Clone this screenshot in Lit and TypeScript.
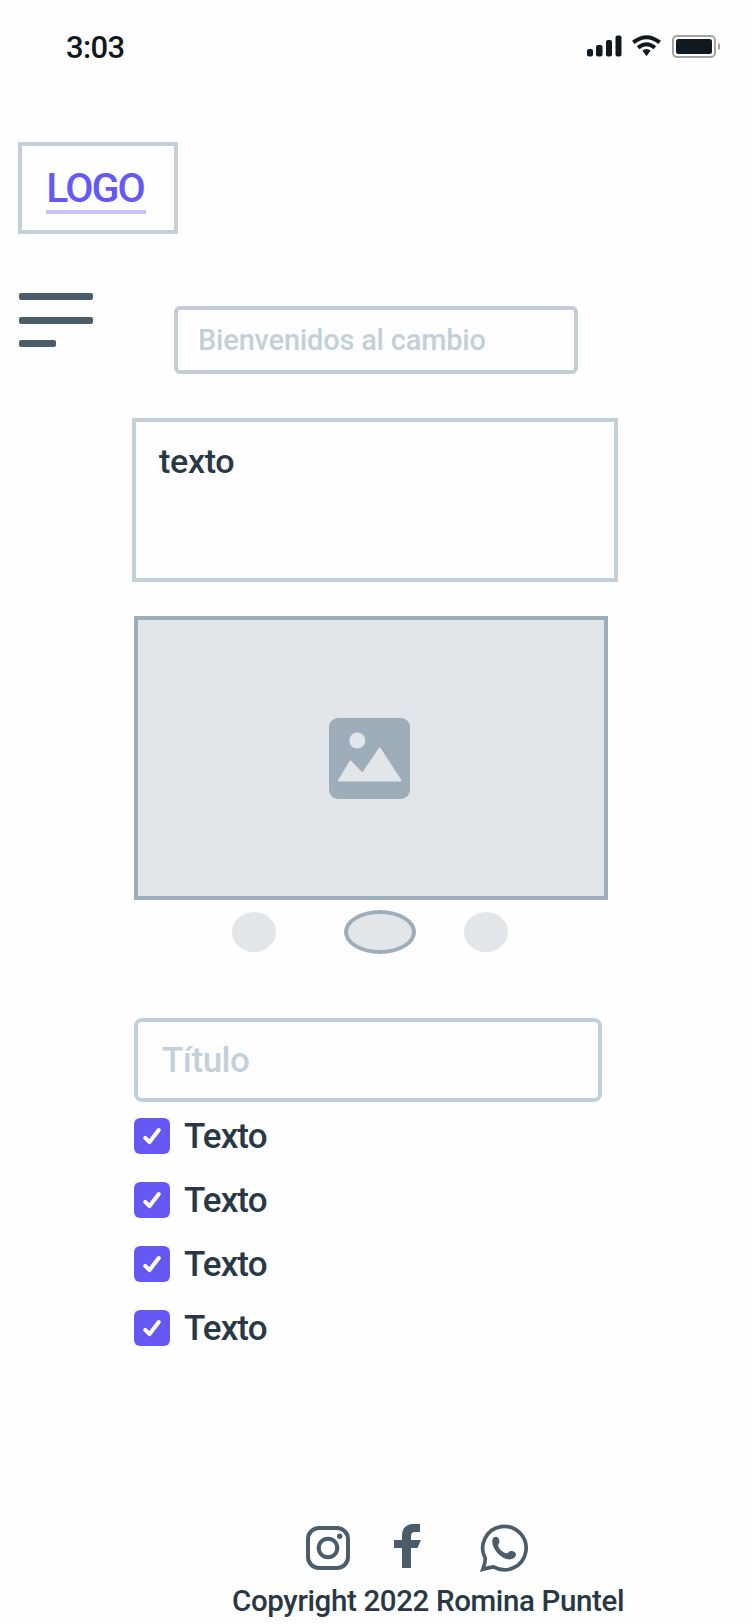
import { LitElement, html, css, svg } from "lit";
import { customElement } from "lit/decorators.js";

@customElement("status-bar")
class StatusBar extends LitElement {
  static styles = css`
    :host { display: flex; justify-content: space-between; align-items: flex-start; height: 142px; padding: 30px 32px 0 66px; box-sizing: border-box; color: #101820; }
    .time { font-size: 31px; line-height: 36px; font-weight: 500; letter-spacing: -0.6px; }
    .signals { display: block; width: 136px; height: 26px; margin-top: 4px; }
  `;
  render() {
    return html`
      <span class="time">3:03</span>
      <svg class="signals" viewBox="0 0 136 26">
        <g fill="#101820">
          <rect x="3" y="15" width="6" height="7.5" rx="2" />
          <rect x="12" y="11" width="6.5" height="11.5" rx="2" />
          <rect x="22" y="6" width="6" height="16.5" rx="2" />
          <rect x="31.5" y="1.5" width="6" height="21" rx="2" />
          <path d="M58.4 16.6q4.1-3.2 8.2 0l-4.1 5.600z" />
          <rect x="92" y="5" width="36" height="15" rx="2.5" />
        </g>
        <g fill="none" stroke="#101820" stroke-width="4">
          <path d="M49.3 8.4q13.2-10.4 26.4 0" />
          <path d="M54.1 13.8q8.4-7 16.8 0" />
        </g>
        <rect x="89" y="2" width="42" height="21" rx="4" fill="none" stroke="#a2a3a5" stroke-width="2" />
        <path d="M134 8.5v8q2.3-1.5 2.3-4t-2.300-4z" fill="#a2a3a5" />
      </svg>
    `;
  }
}

@customElement("check-item")
class CheckItem extends LitElement {
  static styles = css`
    :host { display: flex; gap: 14px; height: 36px; align-items: flex-start; }
    .box { flex: none; width: 36px; height: 36px; border-radius: 6px; background: #6558f5; }
    .label { padding-top: 1px; font-size: 35px; line-height: 36px; letter-spacing: -0.9px; }
  `;
  render() {
    return html`
      <svg class="box" viewBox="0 0 36 36">
        <path d="M11.2 19.8l4.3 4.3 9.3-12" fill="none" stroke="#fff" stroke-width="4" stroke-linecap="round" stroke-linejoin="round" />
      </svg>
      <span class="label"><slot></slot></span>
    `;
  }
}

const instagram = svg`
  <g fill="none" stroke="#4b5d6b" stroke-width="4">
    <rect x="2" y="2" width="40" height="40" rx="11" />
    <circle cx="22" cy="22" r="9.3" />
  </g>
  <circle cx="33.7" cy="10.3" r="2.7" fill="#4b5d6b" />`;

const facebook = svg`
  <path fill="#4b5d6b" d="M8 44V24H0v-8h8v-4C8 4 12 0 20 0h6v8h-5q-4 0-4 4v4h10l-3.500 8H17v20z" />`;

const whatsapp = svg`
  <path fill="none" stroke="#4b5d6b" stroke-width="3.7" d="M2.900 45.200Q5.500 38.500 5.200 34.200A21.700 21.700 0 1 1 13.600 42.900Q8 43.600 2.900 45.200z" />
  <path fill="#4b5d6b" d="M12.200 17.600C12 14.500 13.800 12.700 16 12.700c2.600 0 3.900 3.600 3.200 6.100-.3 1.100-1.300 1.600-1.100 2.700.9 3.700 4.600 7.200 8.500 7.800 1.200.1 1.600-1.300 2.900-1.900 2.600-1.100 6.500.4 6.500 3.200-.2 2.800-3 4.900-6.400 4.900C21.200 35.200 12.500 26 12.200 17.600z" />`;

@customElement("app-root")
class AppRoot extends LitElement {
  static styles = css`
    :host { display: flex; flex-direction: column; width: 752px; height: 1624px; overflow: hidden; background: #fefefe; color: #293845; font-family: Roboto, "Liberation Sans", sans-serif; font-weight: 500; box-sizing: border-box; }
    .logo { box-sizing: border-box; width: 160px; height: 92px; margin-left: 18px; padding: 19px 0 0 24px; border: 4px solid #c3d0da; }
    .link { display: block; box-sizing: border-box; width: 100px; height: 49px; border-bottom: 4px solid #c8c3fb; color: #6558f5; font-size: 41px; line-height: 47px; text-align: center; letter-spacing: -2px; text-indent: -2px; }
    .top { display: flex; align-items: flex-start; margin: 59px 0 0 19px; }
    .menu { display: flex; flex-direction: column; gap: 16.5px; width: 74px; }
    .bar { height: 7px; border-radius: 2px; background: #4b5d6b; }
    .short { width: 37px; }
    .field { box-sizing: border-box; border: 4px solid #c4ced8; color: #c3d0da; }
    .welcome { width: 404px; height: 68px; margin: 13px 0 0 81px; padding-left: 20px; border-radius: 6px; font-size: 29px; line-height: 60px; letter-spacing: -0.2px; }
    .area { box-sizing: border-box; width: 486px; height: 164px; margin: 44px 0 0 132px; padding: 19px 0 0 23px; border: 4px solid #c3d0da; font-size: 34px; line-height: 40px; letter-spacing: -0.3px; }
    .picture { box-sizing: border-box; display: flex; justify-content: center; width: 474px; height: 284px; margin: 34px 0 0 134px; padding: 98px 3px 0 0; border: 4px solid #9dadba; background: #e2e6e9; }
    .photo { width: 81px; height: 81px; }
    .dots { display: flex; align-items: center; height: 44px; margin: 10px 0 0 232px; }
    .dot { width: 44px; height: 40px; border-radius: 50%; background: #e2e6e9; }
    .current { box-sizing: border-box; width: 72px; height: 44px; margin: 0 48px 0 68px; border: 4px solid #9dadba; }
    .title { width: 468px; height: 84px; margin: 64px 0 0 134px; padding-left: 24px; border-radius: 8px; font-size: 35px; line-height: 78px; letter-spacing: -0.5px; }
    .list { display: flex; flex-direction: column; gap: 28px; margin: 16px 0 0 134px; }
    .social { display: flex; margin: 178px 0 0 306px; height: 48px; }
    .ig { width: 44px; height: 44px; margin-top: 2px; }
    .fb { width: 27px; height: 44px; margin-left: 44px; }
    .wa { width: 48px; height: 48px; margin-left: 59px; }
    .copy { margin: 13px 0 0 232px; font-size: 29.5px; line-height: 32px; letter-spacing: -0.37px; white-space: nowrap; }
  `;
  render() {
    return html`
      <status-bar></status-bar>
      <div class="logo"><a class="link">LOGO</a></div>
      <div class="top">
        <div class="menu"><div class="bar"></div><div class="bar"></div><div class="bar short"></div></div>
        <div class="field welcome">Bienvenidos al cambio</div>
      </div>
      <div class="area">texto</div>
      <div class="picture">
        <svg class="photo" viewBox="0 0 81 81">
          <rect width="81" height="81" rx="9" fill="#9dadba" />
          <circle cx="28.3" cy="22.5" r="8" fill="#e2e6e9" />
          <path d="M10 62.5L21.5 43.5L33.5 56L50.7 30.5L71.5 62.5z" fill="#e2e6e9" stroke="#e2e6e9" stroke-width="2" stroke-linejoin="round" />
        </svg>
      </div>
      <div class="dots"><div class="dot"></div><div class="dot current"></div><div class="dot"></div></div>
      <div class="field title">Título</div>
      <div class="list">${[1, 2, 3, 4].map(() => html`<check-item>Texto</check-item>`)}</div>
      <div class="social">
        <svg class="ig" viewBox="0 0 44 44">${instagram}</svg>
        <svg class="fb" viewBox="0 0 27 44">${facebook}</svg>
        <svg class="wa" viewBox="0 0 48 48">${whatsapp}</svg>
      </div>
      <div class="copy">Copyright 2022 Romina Puntel</div>
    `;
  }
}
